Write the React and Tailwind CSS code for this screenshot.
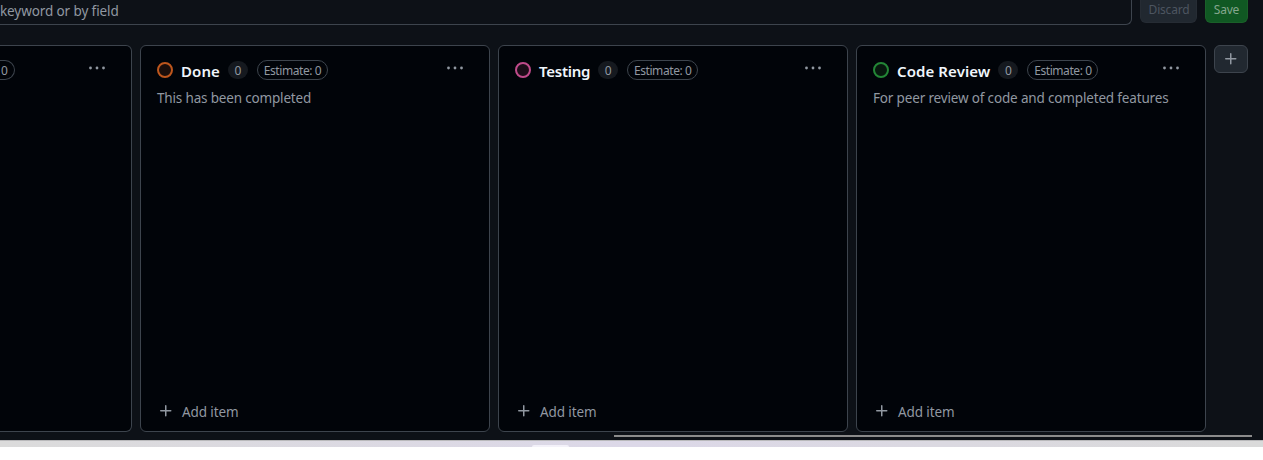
import React from 'react';

function PlusIcon({ className }) {
  return (
    <svg className={className} width="16" height="16" viewBox="0 0 16 16" fill="currentColor">
      <path d="M7.75 2a.75.75 0 0 1 .75.75V7h4.25a.75.75 0 0 1 0 1.5H8.5v4.25a.75.75 0 0 1-1.5 0V8.5H2.75a.75.75 0 0 1 0-1.5H7V2.75A.75.75 0 0 1 7.75 2Z" />
    </svg>
  );
}

function KebabIcon() {
  return (
    <svg width="18" height="6" viewBox="0 0 18 6" fill="currentColor">
      <circle cx="2.5" cy="3" r="1.4" />
      <circle cx="9" cy="3" r="1.4" />
      <circle cx="15.5" cy="3" r="1.4" />
    </svg>
  );
}

function Estimate() {
  return (
    <span className="ml-[9px] flex h-5 w-[71px] shrink-0 items-center justify-center rounded-full border border-[#3d444d] pt-[2px] text-[12px] tracking-[-0.42px] text-[#9198a1]">
      Estimate: 0
    </span>
  );
}

function Column({ title, ring, titleClass, description, descriptionClass }) {
  return (
    <section className="flex h-[387px] w-[350px] shrink-0 flex-col rounded-md border border-[#3d444d] bg-[#010409] px-4">
      <div className="mt-[13px] flex h-[22px] items-center">
        <span className={`size-4 shrink-0 rounded-full border-2 ${ring}`} />
        <h2 className={`ml-2 shrink-0 whitespace-nowrap pt-[2px] text-[15px] font-semibold text-[#f0f6fc] ${titleClass}`}>{title}</h2>
        <span className="ml-2 flex h-[18px] w-5 shrink-0 items-center justify-center rounded-full bg-[#15191f] pt-[2px] text-[12px] text-[#9198a1]">0</span>
        <Estimate />
        <button className="-mt-[5px] mr-[9px] ml-auto text-[#9198a1]"><KebabIcon /></button>
      </div>
      <p className={`mt-[7px] h-[21px] whitespace-nowrap text-[13.5px] leading-[21px] text-[#9198a1] ${descriptionClass}`}>{description}</p>
      <button className="mt-auto mb-[9px] flex h-[21px] items-center text-[13.5px] leading-[21px] text-[#9198a1]">
        <PlusIcon className="-mt-[2px] ml-[1px]" />
        <span className="ml-2 pt-[2px] tracking-[-0.1px]">Add item</span>
      </button>
    </section>
  );
}

export default function App() {
  return (
    <div className="h-[460px] w-[1263px] overflow-hidden bg-white font-['Noto_Sans',sans-serif]">
      <main className="flex h-[440px] flex-col bg-[#0d1117]">
        <header className="flex h-[25px] gap-2">
          <div className="flex h-[25px] w-[1132px] rounded-br-md border-r border-b border-[#3d444d] pt-px text-[13.5px] leading-[20px] text-[#9198a1]">
            <span className="whitespace-nowrap tracking-[-0.1px]">keyword or by field</span>
          </div>
          <button className="flex h-[23px] w-[57px] justify-center rounded-b-md border border-t-0 border-[#262c34] bg-[#212830] pl-px text-[12px] leading-[20px] tracking-[-0.2px] text-[#4d5560]">Discard</button>
          <button className="flex h-[23px] w-[43px] justify-center rounded-b-md border border-t-0 border-[#1a6029] bg-[#105823] text-[12px] leading-[20px] tracking-[-0.2px] text-[#85a68d]">Save</button>
        </header>
        <div className="mt-5 flex h-[387px] gap-2">
          <section className="flex h-[387px] w-[132px] shrink-0 items-start justify-between overflow-hidden rounded-r-md border border-l-0 border-[#3d444d] bg-[#010409]">
            <span className="mt-[14px] flex h-5 w-[15px] items-center rounded-r-full border border-l-0 border-[#3d444d] pt-[2px] pl-px text-[12px] text-[#9198a1]">0</span>
            <button className="mt-[19px] mr-[25px] text-[#9198a1]"><KebabIcon /></button>
          </section>
          <Column title="Done" ring="border-[#bd561d] bg-[#1a0e0b]" titleClass="tracking-[0.1px]" description="This has been completed" descriptionClass="tracking-[-0.17px]" />
          <Column title="Testing" ring="border-[#bf4b8a] bg-[#1b0d18]" titleClass="tracking-[-0.25px]" description="" descriptionClass="" />
          <Column title="Code Review" ring="border-[#238636] bg-[#07180e]" titleClass="tracking-[0.09px]" description="For peer review of code and completed features" descriptionClass="tracking-[-0.16px]" />
          <button className="flex h-7 w-[34px] shrink-0 items-center justify-center rounded-md border border-[#3d444d] bg-[#212830] text-[#9198a1]">
            <PlusIcon />
          </button>
        </div>
        <div className="mt-[3px] ml-[614px] h-[2px] w-[638px] bg-[#8b8b8b]" />
      </main>
      <footer className="flex h-[7px] border-t border-[#b9b9bb] bg-linear-to-r from-[#dbdbdb] via-[#dcd8e8] to-[#dadada]">
        <span className="mt-[4px] ml-[532px] h-[2px] w-[37px] rounded-t-sm bg-[#f3f1f9]" />
      </footer>
    </div>
  );
}
